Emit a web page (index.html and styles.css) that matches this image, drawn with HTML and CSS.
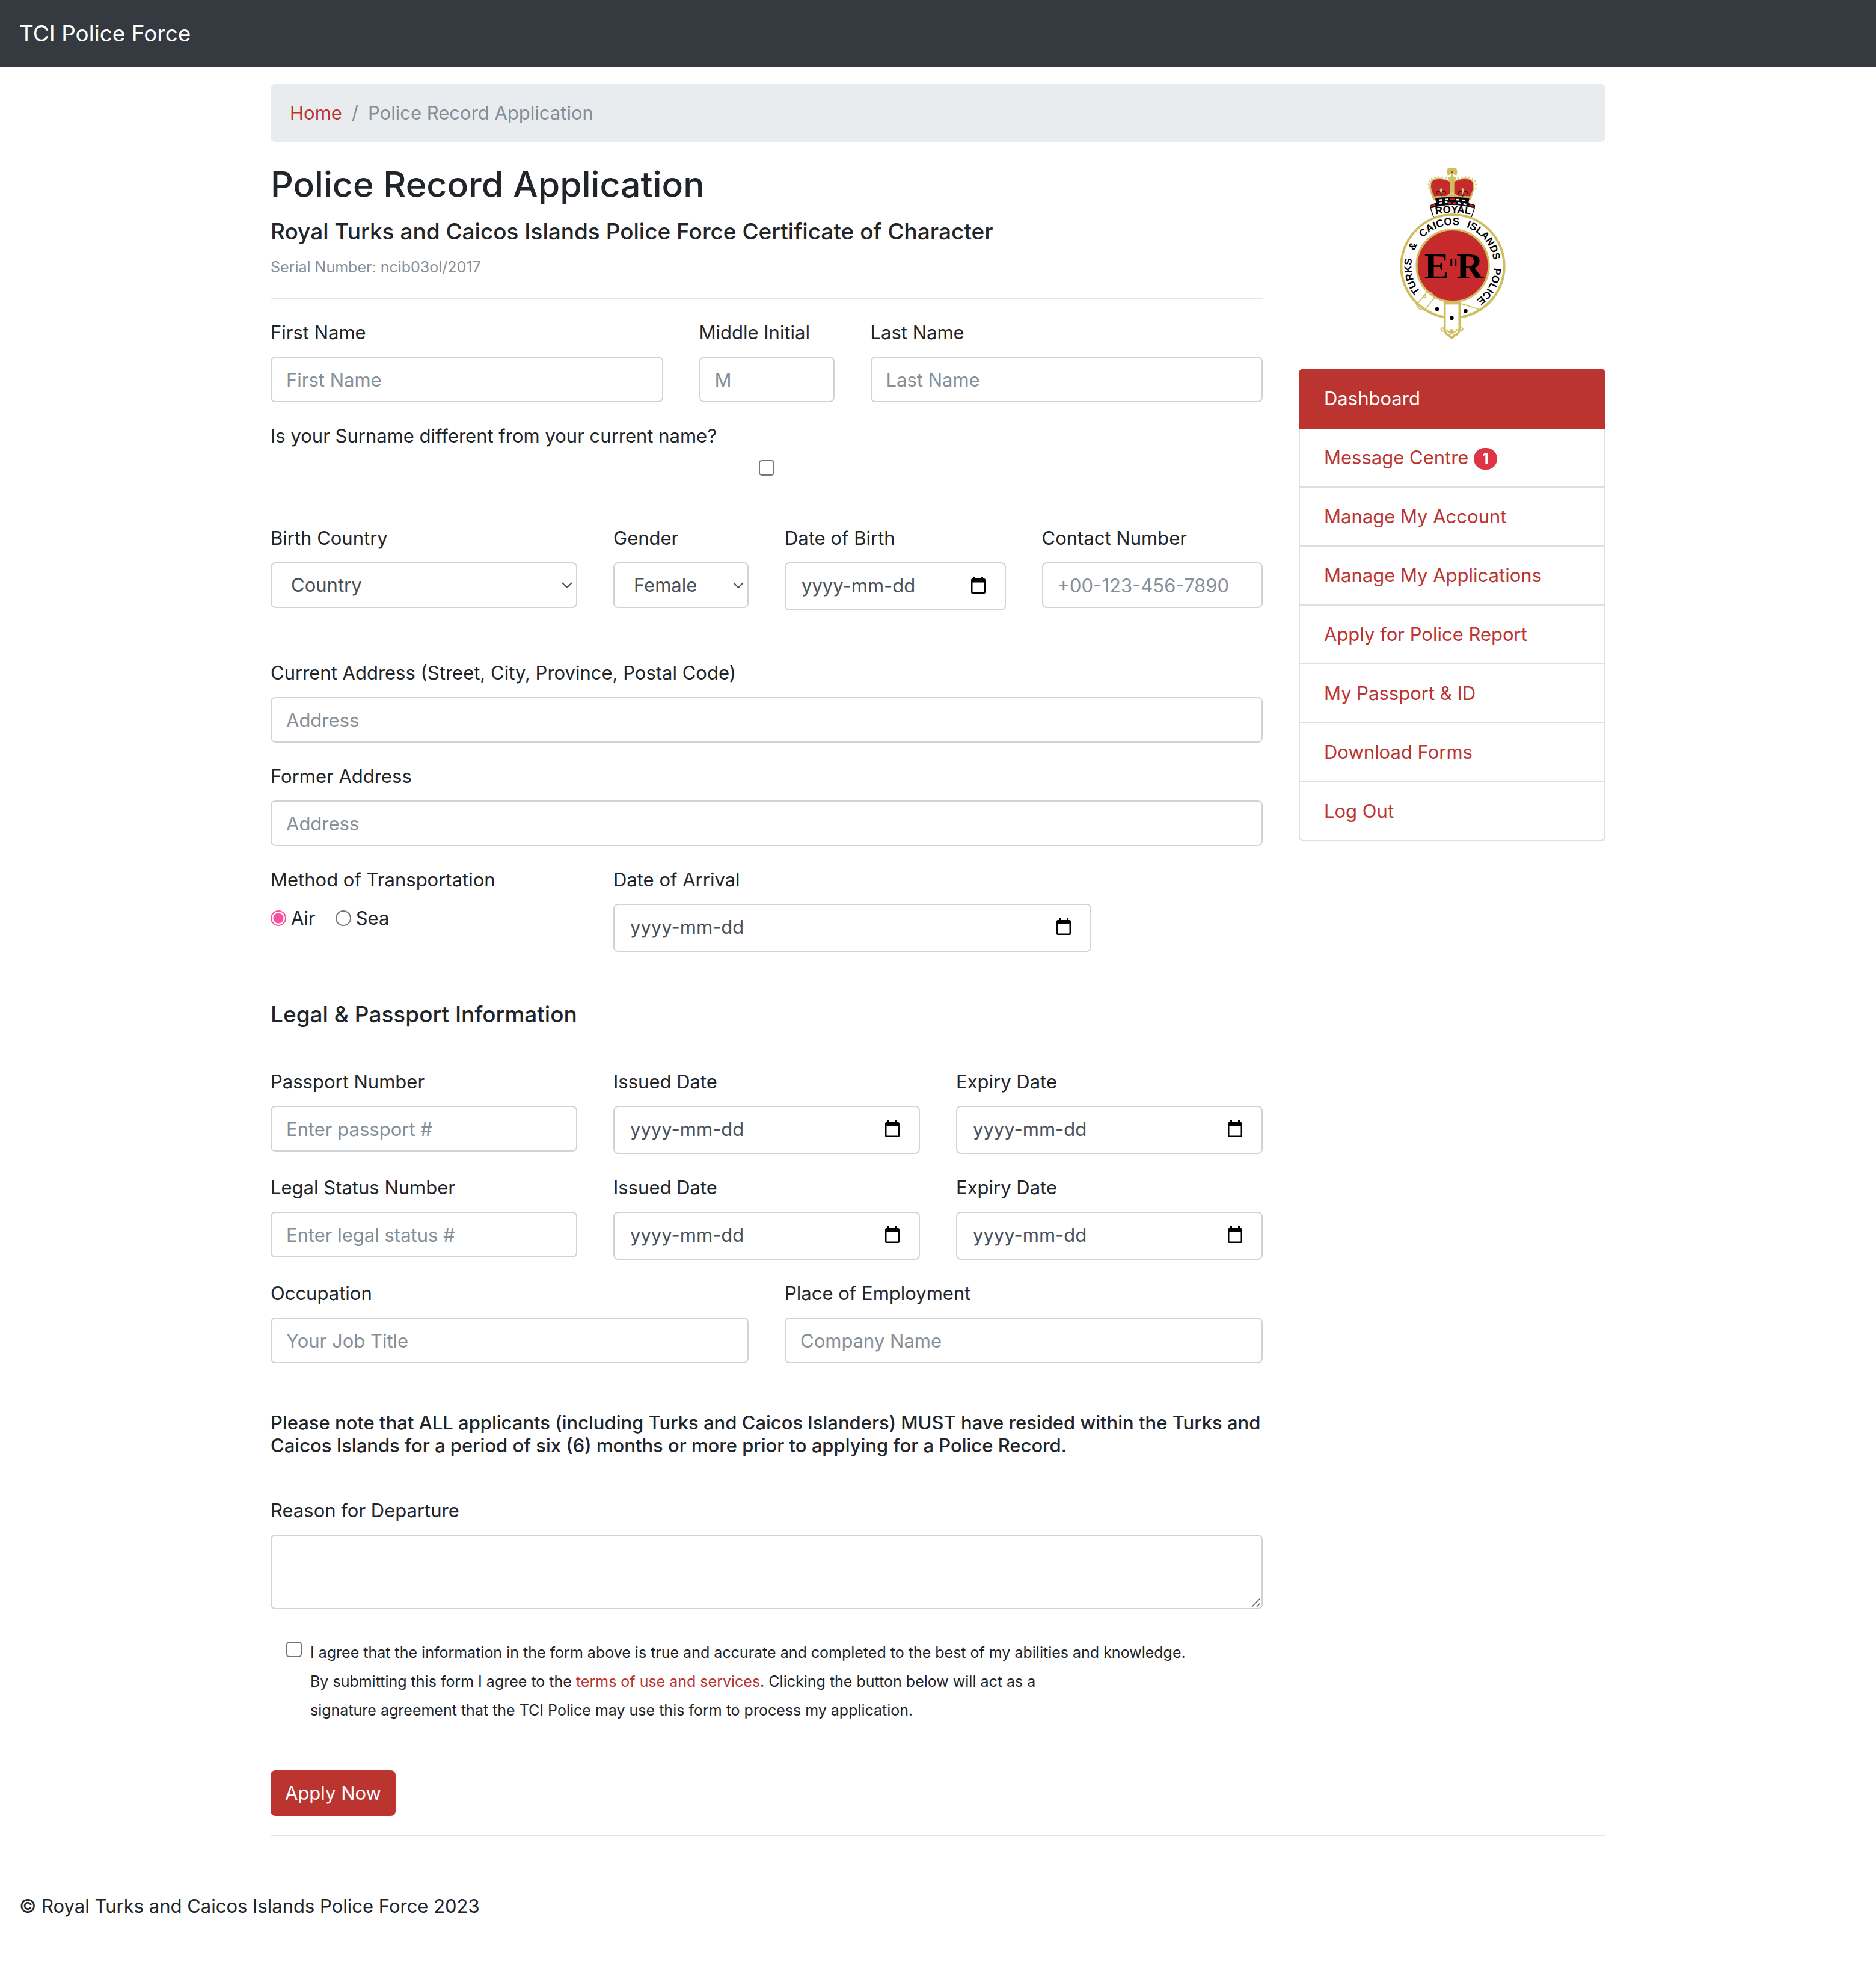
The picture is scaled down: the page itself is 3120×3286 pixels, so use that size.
FILE: index.html
```html
<!DOCTYPE html>
<html lang="en">
<head>
<meta charset="utf-8">
<title>Police Record Application</title>
<link rel="stylesheet" href="styles.css">
</head>
<body>
<svg class="defs" aria-hidden="true">
  <symbol id="calendar" viewBox="0 0 24 28"><path d="M4 0h3v3h10V0h3v3h1.500a2.500 2.500 0 0 1 2.500 2.500v20a2.500 2.500 0 0 1-2.500 2.500h-19A2.500 2.500 0 0 1 0 25.500v-20A2.500 2.500 0 0 1 2.500 3H4zM2.500 9.500v16h19v-16z" fill-rule="evenodd"/></symbol>
  <symbol id="chevron" viewBox="0 0 18 10"><path d="M1 1l8 8 8-8" fill="none" stroke="#495057" stroke-width="2"/></symbol>
</svg>
<header class="navbar"><a class="brand" href="#">TCI Police Force</a></header>
<div class="container">
  <nav class="breadcrumb" aria-label="Breadcrumb"><a href="#">Home</a><span>/</span><span>Police Record Application</span></nav>
  <div class="columns">
    <main class="main">
      <h1>Police Record Application</h1>
      <h2>Royal Turks and Caicos Islands Police Force Certificate of Character</h2>
      <p class="serial">Serial Number: ncib03ol/2017</p>
      <hr>
      <form>
        <div class="row">
          <div class="field span-5"><label for="first">First Name</label><input class="control" id="first" type="text" placeholder="First Name"></div>
          <div class="field span-2"><label for="middle">Middle Initial</label><input class="control" id="middle" type="text" placeholder="M"></div>
          <div class="field span-5"><label for="last">Last Name</label><input class="control" id="last" type="text" placeholder="Last Name"></div>
        </div>
        <div class="row section-end">
          <div class="field span-12"><label for="surname">Is your Surname different from your current name?</label><input class="check centered" id="surname" type="checkbox"></div>
        </div>
        <div class="row section-end">
          <div class="field span-4"><label for="country">Birth Country</label>
            <div class="select"><select class="control" id="country"><option>Country</option></select><svg class="chevron"><use href="#chevron"/></svg></div></div>
          <div class="field span-2"><label for="gender">Gender</label>
            <div class="select"><select class="control" id="gender"><option>Female</option><option>Male</option></select><svg class="chevron"><use href="#chevron"/></svg></div></div>
          <div class="field span-3"><label for="dob">Date of Birth</label>
            <div class="control date"><input id="dob" type="text" placeholder="yyyy-mm-dd"><button type="button" aria-label="Pick date of birth"><svg><use href="#calendar"/></svg></button></div></div>
          <div class="field span-3"><label for="phone">Contact Number</label><input class="control" id="phone" type="tel" placeholder="+00-123-456-7890"></div>
        </div>
        <div class="row">
          <div class="field span-12"><label for="address">Current Address (Street, City, Province, Postal Code)</label><input class="control" id="address" type="text" placeholder="Address"></div>
        </div>
        <div class="row">
          <div class="field span-12"><label for="former">Former Address</label><input class="control" id="former" type="text" placeholder="Address"></div>
        </div>
        <div class="row section-end">
          <fieldset class="span-4"><legend>Method of Transportation</legend>
            <div class="radios">
              <label><input type="radio" name="method" checked>Air</label>
              <label><input type="radio" name="method">Sea</label>
            </div></fieldset>
          <div class="field span-6"><label for="arrival">Date of Arrival</label>
            <div class="control date"><input id="arrival" type="text" placeholder="yyyy-mm-dd"><button type="button" aria-label="Pick date of arrival"><svg><use href="#calendar"/></svg></button></div></div>
        </div>
        <h2 class="form-title">Legal &amp; Passport Information</h2>
        <div class="row">
          <div class="field span-4"><label for="passport">Passport Number</label><input class="control" id="passport" type="text" placeholder="Enter passport #"></div>
          <div class="field span-4"><label for="pissued">Issued Date</label>
            <div class="control date"><input id="pissued" type="text" placeholder="yyyy-mm-dd"><button type="button" aria-label="Pick issued date"><svg><use href="#calendar"/></svg></button></div></div>
          <div class="field span-4"><label for="pexpiry">Expiry Date</label>
            <div class="control date"><input id="pexpiry" type="text" placeholder="yyyy-mm-dd"><button type="button" aria-label="Pick expiry date"><svg><use href="#calendar"/></svg></button></div></div>
        </div>
        <div class="row">
          <div class="field span-4"><label for="legal">Legal Status Number</label><input class="control" id="legal" type="text" placeholder="Enter legal status #"></div>
          <div class="field span-4"><label for="lissued">Issued Date</label>
            <div class="control date"><input id="lissued" type="text" placeholder="yyyy-mm-dd"><button type="button" aria-label="Pick issued date"><svg><use href="#calendar"/></svg></button></div></div>
          <div class="field span-4"><label for="lexpiry">Expiry Date</label>
            <div class="control date"><input id="lexpiry" type="text" placeholder="yyyy-mm-dd"><button type="button" aria-label="Pick expiry date"><svg><use href="#calendar"/></svg></button></div></div>
        </div>
        <div class="row section-end">
          <div class="field span-6"><label for="job">Occupation</label><input class="control" id="job" type="text" placeholder="Your Job Title"></div>
          <div class="field span-6"><label for="company">Place of Employment</label><input class="control" id="company" type="text" placeholder="Company Name"></div>
        </div>
        <p class="note">Please note that ALL applicants (including Turks and Caicos Islanders) MUST have resided within the Turks and<br>Caicos Islands for a period of six (6) months or more prior to applying for a Police Record.</p>
        <div class="field"><label for="reason">Reason for Departure</label>
          <div class="area"><textarea class="control" id="reason" rows="2"></textarea><svg class="grip" viewBox="0 0 14 14"><path d="M0 14L14 0M8 14l6-6" stroke="#555" stroke-width="1.500"/></svg></div></div>
        <div class="agree"><input class="check" id="agree" type="checkbox">
          <label for="agree">I agree that the information in the form above is true and accurate and completed to the best of my abilities and knowledge.<br>By submitting this form I agree to the <a href="#">terms of use and services</a>. Clicking the button below will act as a<br>signature agreement that the TCI Police may use this form to process my application.</label></div>
        <button class="submit" type="submit">Apply Now</button>
      </form>
    </main>
    <aside class="sidebar">
      <svg class="crest" viewBox="0 24 630 939" role="img" aria-label="Royal Turks and Caicos Islands Police">
        <defs>
          <path id="ring" d="M318 754A206 206 0 0 1 318 342A206 206 0 0 1 318 754"/>
          <path id="band" d="M222 292Q318 272 418 292"/>
        </defs>
        <g fill="#cfbd5e">
          <path d="M292 58l8 3h-2l5-4h23l5 4 6-3v8l3-1v23l-3-1v8l-10-3-8-6 4 18h10v18h-36v-18h10l4-18-8 6-10 3v-8h-3V65h3z"/>
          <path d="M216 206c-10-30-18-50-12-72 8-26 40-32 64-24 14 4 30 10 46 10s32-6 46-10c24-8 56-2 64 24 6 22-2 42-12 72l-8 14H224z"/>
        </g>
        <circle cx="315" cy="79" r="6" fill="#a5434a"/>
        <path d="M199 160Q188 104 246 104Q280 104 308 117M432 160Q442 104 384 104Q350 104 322 117" fill="none" stroke="#d8cf92" stroke-width="9" stroke-linecap="round" stroke-dasharray="1 17"/>
        <path d="M226 200c-16-28-22-62-8-77 20-16 66-8 86 5v58l-20 12c-20 0-40 0-58 2zM404 200c16-28 22-62 8-77-20-16-66-8-86 5v58l20 12c20 0 40 0 58 2z" fill="#c72a2c"/>
        <g fill="none" stroke="#251c10" stroke-width="4"><path d="M260 158v42M240 188q-6-14 8-13 12 4 12 20 2-18 14-20 12 0 8 13M368 158v42M348 188q-6-14 8-13 12 4 12 20 2-18 14-20 12 0 8 13"/></g>
        <path d="M254 166l6-9 6 9-6 28zM362 166l6-9 6 9-6 28zM303 178l10 6 10-6v16l-10-6-10 6z" fill="#e4cf7a"/>
        <path d="M231 208q85-9 170 0l-4 26q31 5 34 13l-8 15q-105-42-212 0l-8-15q5-8 32-14z" fill="#090609"/>
        <path d="M250 219l15-2M279 216l15-1M336 216l15 1M365 219l15 2M250 235l15-4M279 230l13-2M342 231l15 3M371 237l15 4" stroke="#fff" stroke-width="8"/>
        <path d="M305 215h22M297 233h14M320 233h15M208 249l20-7M402 242l20 7" stroke="#d0232d" stroke-width="8"/>
        <path d="M207 258q107-34 220 0l-18 52H225z" fill="#fff" stroke="#111" stroke-width="4"/>
        <circle cx="318" cy="548" r="257" fill="#fff" stroke="#cfbd5e" stroke-width="12"/>
        <circle cx="318" cy="545" r="180" fill="#c72a2c" stroke="#cfbd5e" stroke-width="10"/>
        <g class="crest-text">
          <text><textPath href="#band" startOffset="50%" text-anchor="middle">ROYAL</textPath></text>
          <text><textPath href="#ring" startOffset="186">TURKS</textPath></text>
          <text><textPath href="#ring" startOffset="402">&amp;</textPath></text>
          <text><textPath href="#ring" startOffset="480">CAICOS</textPath></text>
          <text><textPath href="#ring" startOffset="716">ISLANDS</textPath></text>
          <text><textPath href="#ring" startOffset="978">POLICE</textPath></text>
        </g>
        <g class="crest-cipher"><text x="176" y="608">E</text><text x="337" y="608">R</text><text class="crest-numeral" x="300" y="550">II</text></g>
        <g fill="none" stroke="#cfbd5e" stroke-width="5"><path d="M190 678l-52 62M228 706l-50 60M186 676q24-8 40 28M136 736q10 34 42 30M355 734q44 12 104 34"/><circle cx="178" cy="698" r="6"/></g>
        <path d="M278 728h74v130q0 30-28 36a12 12 0 0 1-22 0q-26-8-24-36z" fill="#fff" stroke="#cfbd5e" stroke-width="11"/>
        <path d="M273 722h84v17h-84z" fill="#cfbd5e"/>
        <g fill="none" stroke="#cfbd5e" stroke-width="6"><path d="M272 872q-14-2-12-14 12-6 14 4M356 872q14-2 12-14-12-6-14 4M287 862q12 26 26 6 14 20 28-6"/><circle cx="313" cy="896" r="11"/></g>
        <path d="M303 862h20l-4 10 6 10h-24l6-10z" fill="#cfbd5e"/>
        <circle cx="240" cy="762" r="10"/><circle cx="313" cy="806" r="10"/><circle cx="382" cy="772" r="10"/>
      </svg>
      <nav class="menu" aria-label="Account">
        <a class="active" href="#">Dashboard</a>
        <a href="#">Message Centre <span class="badge">1</span></a>
        <a href="#">Manage My Account</a>
        <a href="#">Manage My Applications</a>
        <a href="#">Apply for Police Report</a>
        <a href="#">My Passport &amp; ID</a>
        <a href="#">Download Forms</a>
        <a href="#">Log Out</a>
      </nav>
    </aside>
  </div>
  <hr class="end">
</div>
<footer class="footer">© Royal Turks and Caicos Islands Police Force 2023</footer>
</body>
</html>
```
FILE: styles.css
```css
* { box-sizing: border-box; }
body {
  margin: 0;
  background: #fff;
  color: #212529;
  font: 400 31px/48px Inter, "Liberation Sans", sans-serif;
}
a { color: #bb342f; text-decoration: none; }
h1, h2, p { margin: 0; }
hr { height: 2px; margin: 32px 0; border: 0; background: #e5e5e5; }
input, select, textarea, button { font: inherit; color: inherit; margin: 0; }
.defs { display: none; }

.navbar { display: flex; align-items: center; height: 112px; padding: 0 32px; background: #343a40; }
.brand { color: #fff; font-size: 37px; }

.container { max-width: 2280px; margin: 0 auto; padding: 28px 30px 0; }
.breadcrumb { display: flex; gap: 16px; padding: 24px 32px; margin-bottom: 32px; border-radius: 8px; background: #e9ecef; color: #868e96; }

.columns { display: grid; grid-template-columns: 1650fr 510fr; gap: 60px; }
.main, .sidebar { min-width: 0; }
h1 { margin-bottom: 16px; font-size: 59px; line-height: 77px; font-weight: 500; }
h2 { margin-bottom: 16px; font-size: 37px; line-height: 48px; font-weight: 500; }
.serial { color: #868e96; font-size: 25px; line-height: 38px; }

.row { display: grid; grid-template-columns: repeat(12, minmax(0, 1fr)); gap: 60px; align-items: start; margin-bottom: 32px; }
.section-end { margin-bottom: 80px; }
.span-2 { grid-column: span 2; }
.span-3 { grid-column: span 3; }
.span-4 { grid-column: span 4; }
.span-5 { grid-column: span 5; }
.span-6 { grid-column: span 6; }
.span-12 { grid-column: span 12; }
.field { display: flex; flex-direction: column; gap: 16px; }
.control {
  width: 100%;
  height: 76px;
  padding: 12px 24px;
  border: 2px solid #ced4da;
  border-radius: 8px;
  background: #fff;
  color: #495057;
}
.control::placeholder { color: #868e96; opacity: 1; }
.date { display: flex; align-items: center; height: 80px; padding: 10px 32px 14px 26px; }
.date input { flex: 1; min-width: 0; padding: 2px 0 0; border: 0; background: none; outline: 0; }
.date input::placeholder { color: #495057; opacity: 1; }
.date button { display: flex; padding: 0; border: 0; background: none; color: #000; }
.date svg { width: 24px; height: 28px; }
.select { display: grid; align-items: center; }
.select > * { grid-area: 1 / 1; }
.select select { appearance: none; padding: 12px 32px; }
.chevron { width: 18px; height: 10px; margin-right: 8px; justify-self: end; pointer-events: none; }

.check, .radios input { appearance: none; flex: none; width: 26px; height: 26px; border: 2px solid #767676; border-radius: 5px; background: #fff; }
.centered { align-self: center; }
.radios input { border-radius: 50%; }
.radios input:checked { border-color: #f9509f; background: radial-gradient(circle, #f9509f 8px, #fff 9px); }
fieldset { min-width: 0; margin: 0; padding: 0; border: 0; }
legend { padding: 0; margin-bottom: 16px; }
.radios { display: flex; gap: 33px; }
.radios label { display: flex; align-items: center; gap: 8px; }

.form-title { margin-bottom: 64px; }
.note { margin-bottom: 65px; font-weight: 500; line-height: 38px; }
.area { display: grid; }
.area > * { grid-area: 1 / 1; }
.area textarea { display: block; height: 124px; resize: none; }
.grip { width: 14px; height: 14px; margin: 4px; place-self: end; pointer-events: none; }
.agree { display: flex; align-items: flex-start; gap: 14px; padding: 48px 26px 76px; font-size: 25px; }
.agree .check { margin-top: 6px; }
.submit { display: block; height: 76px; padding: 12px 24px; border: 0; border-radius: 8px; background: #bb342f; color: #fff; }

.crest { display: block; width: 210px; height: 313px; margin: 0 auto 32px; }
.crest-text { font: 700 51px "Liberation Sans", sans-serif; }
.crest-cipher { font: 700 186px "Liberation Serif", serif; }
.crest-numeral { font-size: 54px; }
.menu { border: 2px solid #dfdfdf; border-radius: 8px; }
.menu a { display: block; padding: 24px 40px; border-bottom: 2px solid #dfdfdf; }
.menu a:last-child { border-bottom: 0; }
.menu .active { margin: -2px -2px 0; padding: 26px 42px 24px; border-color: #bb342f; border-radius: 8px 8px 0 0; background: #bb342f; color: #fff; }
.badge { display: inline-block; padding: 6px 14px; border-radius: 20px; background: #dc3545; color: #fff; font-size: 24px; font-weight: 700; line-height: 24px; vertical-align: 1px; }

.end { margin-bottom: 0; }
.footer { padding: 92px 32px; }
```
